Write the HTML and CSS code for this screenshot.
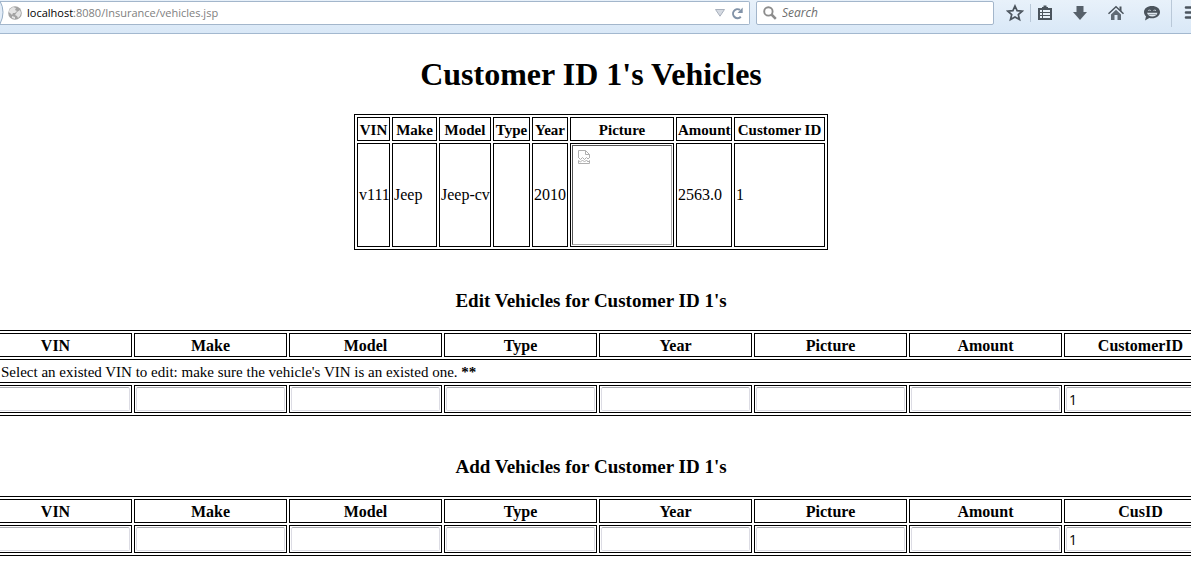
FILE: index.html
```html
<!DOCTYPE html>
<html lang="en">
<head>
<meta charset="utf-8">
<title>Customer ID 1's Vehicles</title>
<link rel="stylesheet" href="styles.css">
</head>
<body>
<header class="toolbar">
  <div class="address">
    <svg class="back-edge" width="4" height="24" viewBox="0 0 4 24" aria-hidden="true"><path d="M0 0Q6 11 0 23" fill="#e3edf8" stroke="#97aec6"/></svg>
    <svg class="globe" width="14" height="14" viewBox="0 0 14 14" aria-hidden="true"><circle cx="7" cy="7" r="6.8" fill="#a3a3a3"/><path d="M2 3l3-2 3 1-1 2 2 1-2 2H5L4 9 2 7 0.5 6zM9 6l3-2 1 3-1 3-2 2-1-2-2-1zM4 10l3 1v2L4 12z" fill="#e4e4e4"/></svg>
    <span class="url" role="textbox" aria-label="Address" contenteditable="true" spellcheck="false"><span class="host">localhost</span>:8080/Insurance/vehicles.jsp</span>
    <button class="icon-btn drop" aria-label="Show history"><svg width="10" height="8" viewBox="0 0 10 8"><path d="M.5.5h9L5 7.2z" fill="#d5dae2" stroke="#a9b1bd"/></svg></button>
    <button class="icon-btn" aria-label="Reload"><svg width="13" height="13" viewBox="0 0 13 13"><path d="M9.800 9.800A4.500 4.500 0 1 1 9 2.900" fill="none" stroke="#8293a8" stroke-width="2"/><path d="M11.700.5v5.500H6.500z" fill="#8293a8"/></svg></button>
  </div>
  <label class="search">
    <svg width="14" height="14" viewBox="0 0 14 14" aria-hidden="true"><circle cx="5.4" cy="5.4" r="4.2" fill="none" stroke="#8c8c8c" stroke-width="1.9"/><path d="M8.5 8.5l4.3 4.3" stroke="#8c8c8c" stroke-width="2.5"/></svg>
    <input class="search-input" type="text" placeholder="Search" aria-label="Search">
  </label>
  <button class="icon-btn star" aria-label="Bookmark"><svg width="18" height="18" viewBox="0 0 18 18"><path d="M9 2l2.1 4.700 5.100.5-3.900 3.400 1.200 5L9 12.900l-4.500 2.700 1.200-5-3.900-3.400 5.100-.5z" fill="none" stroke="#4b545d" stroke-width="1.700"/></svg></button>
  <span class="rule"></span>
  <button class="icon-btn list" aria-label="Bookmarks list"><svg width="16" height="16" viewBox="0 0 16 16"><path d="M1 3h4V2h1.500V.5h3V2H11v1h4v12H1z" fill="#4b545d"/><path d="M3 5h2v2H3zm3 0h7v2H6zM3 8h2v2H3zm3 0h7v2H6zM3 11h2v2H3zm3 0h7v2H6z" fill="#e8f1fa"/></svg></button>
  <button class="icon-btn" aria-label="Downloads"><svg width="18" height="18" viewBox="0 0 18 18"><path d="M5.500 2h7v6H16l-7 8-7-8h3.500z" fill="#56606a"/></svg></button>
  <button class="icon-btn" aria-label="Home"><svg width="18" height="18" viewBox="0 0 18 18"><path d="M1.500 9.800L9 2.800l7.500 7" fill="none" stroke="#4b545d" stroke-width="1.500"/><path d="M12.500 2.500h2v5l-2-2z" fill="#4b545d"/><path d="M9 5.700l5 4.700V16h-3.500v-5h-3v5H4v-5.600z" fill="#616b75"/></svg></button>
  <button class="icon-btn" aria-label="Chat"><svg width="18" height="18" viewBox="0 0 18 18"><path d="M9 2c4.600 0 8 2.600 8 6s-3.400 6.300-8 6.300c-1 0-1.900-.1-2.700-.3L2 16.500l1-4.200C1.700 11.200 1 9.700 1 8c0-3.400 3.400-6 8-6z" fill="#4b545d"/><path d="M5.500 6.800q1-2 2 0M10.700 6.800q1-2 2 0" fill="none" stroke="#e5eef7"/><path d="M4 8.800h10.500c-.5 2.300-2.500 3.700-5.200 3.700S4.500 11.100 4 8.800z" fill="#dfe8f0"/><path d="M5.500 10.500h7.500" stroke="#7c868f" stroke-width=".7"/></svg></button>
  <span class="rule tall"></span>
  <button class="icon-btn menu" aria-label="Menu"><svg width="18" height="18" viewBox="0 0 18 18"><path d="M2 3.500h14M2 8.500h14M2 13.500h14" stroke="#4b545d" stroke-width="2.600" stroke-linecap="round"/></svg></button>
</header>

<main class="page">
  <h1 class="title">Customer ID 1's Vehicles</h1>
  <table class="grid summary">
    <colgroup><col class="w-vin"><col class="w-make"><col class="w-model"><col class="w-type"><col class="w-year"><col class="w-picture"><col class="w-amount"><col class="w-customer"></colgroup>
    <thead><tr><th>VIN</th><th>Make</th><th>Model</th><th>Type</th><th>Year</th><th>Picture</th><th>Amount</th><th>Customer ID</th></tr></thead>
    <tbody><tr><td>v111</td><td>Jeep</td><td>Jeep-cv</td><td></td><td>2010</td>
      <td><div class="missing" role="img" aria-label="Vehicle picture"><svg width="12" height="14" viewBox="0 0 12 14"><path d="M.5 8V.5h7l4 4V8M7.500.5v4h4M.5 7.500l2 2 2-2 2 2 2-2 1.500 1.500 1.500-1.500M.5 13.500V10.500l2 1.500 2-2 2 2 2-2 1.500 2 1.500-1.500v3z" fill="none" stroke="#b0b0b0"/></svg></div></td>
      <td>2563.0</td><td>1</td></tr></tbody>
  </table>

  <h3 class="subtitle">Edit Vehicles for Customer ID 1's</h3>
  <table class="grid wide">
    <thead><tr><th>VIN</th><th>Make</th><th>Model</th><th>Type</th><th>Year</th><th>Picture</th><th>Amount</th><th>CustomerID</th></tr></thead>
    <tbody>
      <tr><td class="note" colspan="8">Select an existed VIN to edit: make sure the vehicle's VIN is an existed one. <b>**</b></td></tr>
      <tr><td><input class="field" aria-label="VIN"></td><td><input class="field" aria-label="Make"></td><td><input class="field" aria-label="Model"></td><td><input class="field" aria-label="Type"></td><td><input class="field" aria-label="Year"></td><td><input class="field" aria-label="Picture"></td><td><input class="field" aria-label="Amount"></td><td><input class="field" aria-label="CustomerID" value="1"></td></tr>
    </tbody>
  </table>

  <h3 class="subtitle">Add Vehicles for Customer ID 1's</h3>
  <table class="grid wide">
    <thead><tr><th>VIN</th><th>Make</th><th>Model</th><th>Type</th><th>Year</th><th>Picture</th><th>Amount</th><th>CusID</th></tr></thead>
    <tbody><tr><td><input class="field" aria-label="VIN"></td><td><input class="field" aria-label="Make"></td><td><input class="field" aria-label="Model"></td><td><input class="field" aria-label="Type"></td><td><input class="field" aria-label="Year"></td><td><input class="field" aria-label="Picture"></td><td><input class="field" aria-label="Amount"></td><td><input class="field" aria-label="CusID" value="1"></td></tr></tbody>
  </table>
</main>
</body>
</html>
```
FILE: styles.css
```css
* { box-sizing: border-box; }
body {
  margin: 0;
  overflow-x: hidden;
  background: #fff;
  color: #000;
  font: 16px/20px "Liberation Serif", "Times New Roman", serif;
}

/* Browser toolbar */
.toolbar {
  display: flex;
  align-items: center;
  height: 34px;
  padding-bottom: 7px;
  overflow: hidden;
  border-bottom: 1px solid #a3b8cf;
  background: linear-gradient(#e8f1fa, #d9e8f7);
  font: 12px/16px "Open Sans", "Noto Sans", sans-serif;
}
.address, .search {
  display: flex;
  align-items: center;
  height: 24px;
  border: 1px solid #a3b6cb;
  background: #fff;
}
.address {
  flex: 1;
  border-left: 0;
  border-radius: 0 2px 2px 0;
  padding-right: 5px;
}
.back-edge { margin-right: 4px; }
.globe { margin-right: 5px; }
.url { flex: 1; color: #808080; white-space: nowrap; font-size: 11px; }
.host { color: #000; }
.search {
  width: 238px;
  margin-left: 6px;
  padding: 0 6px;
  border-radius: 2px;
}
.search-input {
  flex: 1;
  min-width: 0;
  margin-left: 5px;
  padding: 0;
  border: 0;
  background: none;
  font: italic 12px/16px "Open Sans", "Noto Sans", sans-serif;
}
.search-input::placeholder { color: #6d6d6d; }
.icon-btn {
  display: flex;
  flex: none;
  padding: 0;
  border: 0;
  background: none;
}
.icon-btn svg { flex: none; }
.toolbar > .icon-btn + .icon-btn { margin-left: 18px; }
.drop { margin-right: 6px; }
.star { margin-left: 12px; }
.list { margin-left: 6px; }
.menu { width: 7px; margin-left: 12px; overflow: hidden; }
.rule { width: 1px; height: 18px; margin-left: 6px; background: #b9c8d8; }
.tall { height: 28px; margin-left: 10px; }

/* Page */
.page { overflow: hidden; padding-right: 9px; }
.title { margin: 22px 0 21px; font-size: 32px; line-height: 37px; text-align: center; }
.subtitle { margin: 40px 0 19px; font-size: 19px; line-height: 21px; text-align: center; }

.grid {
  table-layout: fixed;
  border: 1px solid #000;
  border-spacing: 2px;
  white-space: nowrap;
}
.grid th, .grid td { padding: 1px; border: 1px solid #000; }
.grid th { padding: 2px 1px 0; }
.summary { width: 474px; margin: 0 auto; }
.summary th { font-size: 15px; }
.w-vin { width: 33px; }
.w-make { width: 45px; }
.w-model { width: 52px; }
.w-type { width: 37px; }
.w-year { width: 36px; }
.w-picture { width: 104px; }
.w-amount { width: 56px; }
.w-customer { width: 91px; }
.missing {
  height: 100px;
  padding: 4px 5px;
  border: 1px solid;
  border-color: #555 #aaa #aaa #555;
}
.missing svg { display: block; }

/* The form tables run past both window edges */
.wide { width: calc(100% + 62px); margin-left: -24px; }
.grid .note { padding: 2px 1px 0 22px; border-width: 1px 0; font-size: 15px; }
.field {
  display: block;
  width: 100%;
  height: 24px;
  padding: 1px 2px;
  border: 1px solid #dcdce4;
  border-top-color: #abadb3;
  border-radius: 2px;
  font: 14px/20px "Open Sans", "Noto Sans", sans-serif;
}
```
